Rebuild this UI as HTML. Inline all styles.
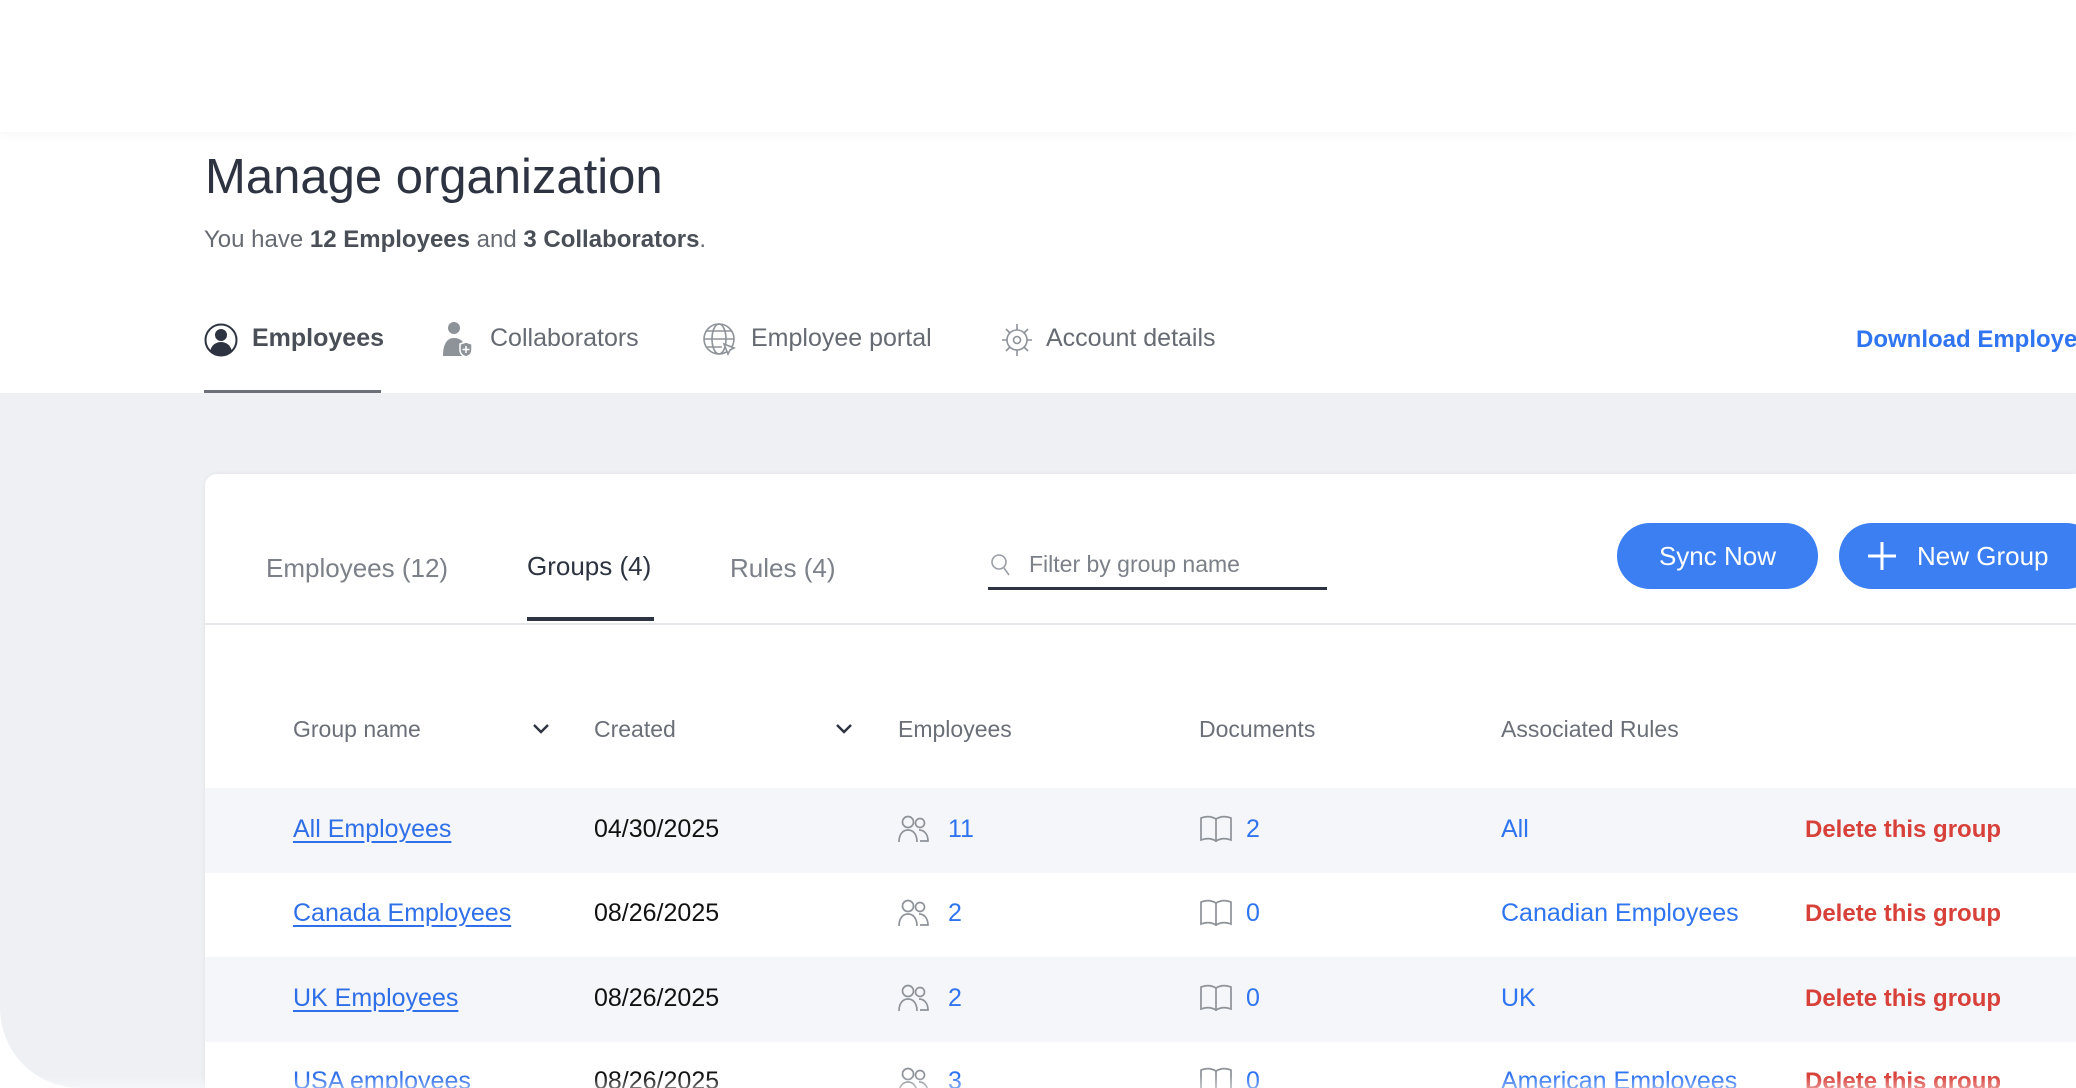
<!DOCTYPE html>
<html style="width:2076px;height:1088px;overflow:hidden"><head><meta charset="utf-8"><style>
*{margin:0;padding:0;box-sizing:border-box}
body{width:2076px;height:1088px;overflow:hidden;background:#fff;font-family:"Liberation Sans",sans-serif;position:relative}
.a{position:absolute;white-space:nowrap}
.gray{position:absolute;left:0;top:393px;width:2076px;height:695px;background:#eff0f4;border-bottom-left-radius:80px}
.card{position:absolute;left:205px;top:474px;width:1871px;height:614px;background:#fff;border-top-left-radius:12px;box-shadow:0 0 6px rgba(0,0,0,.05)}
.row{position:absolute;left:205px;width:1871px;height:85px}
.hd{font-size:23px;color:#6b6f78;top:716px}
.cell{font-size:25px}
.lnk{color:#2f6fe8;text-decoration:underline;text-underline-offset:4px}
.blue{color:#2f74f0}
.del{color:#d8403a;font-weight:bold;font-size:24px}
.btn{position:absolute;background:#3b7ff3;color:#fff;border-radius:34px;font-size:26px;height:66px;line-height:66px;top:523px}
</style></head><body>
<div class="a" style="left:0;top:0;width:2076px;height:132px;background:#fff;box-shadow:0 4px 10px rgba(0,0,0,.03)"></div>
<div class="a" style="left:205px;top:149px;font-size:49px;color:#2d3340">Manage organization</div>
<div class="a" style="left:204px;top:226px;font-size:24px;color:#666a72">You have <b style="color:#4a4e57">12 Employees</b> and <b style="color:#4a4e57">3 Collaborators</b>.</div>

<svg class="a" style="left:204px;top:322px" width="34" height="36" viewBox="0 0 34 36"><circle cx="17" cy="18" r="15.5" fill="#fff" stroke="#2d3340" stroke-width="2"/><circle cx="17" cy="13" r="6" fill="#2d3340"/><path d="M6 30c1-7 6-10 11-10s10 3 11 10c-3 3-7 4-11 4s-8-1-11-4z" fill="#2d3340"/></svg>
<div class="a" style="left:252px;top:324px;font-size:25px;font-weight:bold;color:#4a4e57">Employees</div>
<svg class="a" style="left:440px;top:320px" width="36" height="38" viewBox="0 0 36 38"><circle cx="14" cy="8" r="6" fill="#8e9299"/><path d="M3 36c0-12 4-18 11-18s10 4 11 10v8z" fill="#8e9299"/><path d="M20 24l6-2 6 2v6c0 4-3 6-6 7-3-1-6-3-6-7z" fill="#8e9299" stroke="#fff" stroke-width="1.5"/><path d="M26 26v7M22.5 29.5h7" stroke="#fff" stroke-width="1.5"/></svg>
<div class="a" style="left:490px;top:324px;font-size:25px;color:#666a72">Collaborators</div>
<svg class="a" style="left:702px;top:322px" width="36" height="36" viewBox="0 0 36 36" fill="none" stroke="#8e9299" stroke-width="1.6"><circle cx="17" cy="17" r="15"/><ellipse cx="17" cy="17" rx="7" ry="15"/><path d="M2 17h30M4 9h26M4 25h16"/><path d="M22 22l10 4-4 2-2 4z" fill="#fff"/></svg>
<div class="a" style="left:751px;top:324px;font-size:25px;color:#666a72">Employee portal</div>
<svg class="a" style="left:999px;top:321px" width="36" height="38" viewBox="0 0 36 38" fill="none" stroke="#8e9299" stroke-width="1.6"><circle cx="18" cy="19" r="10"/><circle cx="18" cy="19" r="3.5"/><path d="M18 3v6M18 29v6M3 19h5M28 19h5M7 8l4 4M29 8l-4 4M7 30l4-4M29 30l-4-4"/></svg>
<div class="a" style="left:1046px;top:324px;font-size:25px;color:#666a72">Account details</div>
<div class="a" style="left:1856px;top:326px;font-size:24px;font-weight:bold;color:#2f74f0">Download Employees</div>
<div class="a" style="left:204px;top:390px;width:177px;height:3px;background:#6d7078"></div>

<div class="gray"></div>
<div class="card"></div>
<div class="a" style="left:205px;top:623px;width:1871px;height:2px;background:#e6e7ea"></div>
<div class="a" style="left:266px;top:553px;font-size:26px;color:#7c8088">Employees (12)</div>
<div class="a" style="left:527px;top:551px;font-size:26px;color:#2d3340">Groups (4)</div>
<div class="a" style="left:730px;top:553px;font-size:26px;color:#7c8088">Rules (4)</div>
<div class="a" style="left:527px;top:617px;width:127px;height:4px;background:#2d3340"></div>
<svg class="a" style="left:990px;top:553px" width="22" height="26" viewBox="0 0 22 26" fill="none" stroke="#9a9ea6" stroke-width="1.6"><circle cx="9" cy="9" r="7"/><path d="M14 15l5 7"/></svg>
<div class="a" style="left:1029px;top:551px;font-size:23px;color:#7c8088">Filter by group name</div>
<div class="a" style="left:988px;top:587px;width:339px;height:3px;background:#2d3340"></div>
<div class="btn" style="left:1617px;width:201px;text-align:center">Sync Now</div>
<div class="btn" style="left:1839px;width:260px;padding-left:78px">New Group</div>
<svg class="a" style="left:1866px;top:540px" width="32" height="32" viewBox="0 0 32 32" stroke="#fff" stroke-width="3"><path d="M16 2v28M2 16h28"/></svg>

<div class="a hd" style="left:293px">Group name</div>
<div class="a hd" style="left:594px">Created</div>
<div class="a hd" style="left:898px">Employees</div>
<div class="a hd" style="left:1199px">Documents</div>
<div class="a hd" style="left:1501px">Associated Rules</div>
<svg class="a" style="left:532px;top:722px" width="18" height="14" viewBox="0 0 18 14" fill="none" stroke="#2d3340" stroke-width="2.4"><path d="M2 3l7 7 7-7"/></svg>
<svg class="a" style="left:835px;top:722px" width="18" height="14" viewBox="0 0 18 14" fill="none" stroke="#2d3340" stroke-width="2.4"><path d="M2 3l7 7 7-7"/></svg>

<div class="row" style="top:788px;background:#f5f6f9"></div>
<div class="row" style="top:957px;background:#f5f6f9"></div>

<div class="a cell lnk" style="left:293px;top:815px">All Employees</div>
<div class="a cell" style="left:594px;top:815px;color:#111">04/30/2025</div>
<div class="a cell blue" style="left:948px;top:815px">11</div>
<div class="a cell blue" style="left:1246px;top:815px">2</div>
<div class="a cell blue" style="left:1501px;top:815px">All</div>
<div class="a del" style="left:1805px;top:816px">Delete this group</div>

<div class="a cell lnk" style="left:293px;top:899px">Canada Employees</div>
<div class="a cell" style="left:594px;top:899px;color:#111">08/26/2025</div>
<div class="a cell blue" style="left:948px;top:899px">2</div>
<div class="a cell blue" style="left:1246px;top:899px">0</div>
<div class="a cell blue" style="left:1501px;top:899px">Canadian Employees</div>
<div class="a del" style="left:1805px;top:900px">Delete this group</div>

<div class="a cell lnk" style="left:293px;top:984px">UK Employees</div>
<div class="a cell" style="left:594px;top:984px;color:#111">08/26/2025</div>
<div class="a cell blue" style="left:948px;top:984px">2</div>
<div class="a cell blue" style="left:1246px;top:984px">0</div>
<div class="a cell blue" style="left:1501px;top:984px">UK</div>
<div class="a del" style="left:1805px;top:985px">Delete this group</div>

<div class="a cell lnk" style="left:293px;top:1067px">USA employees</div>
<div class="a cell" style="left:594px;top:1067px;color:#111">08/26/2025</div>
<div class="a cell blue" style="left:948px;top:1067px">3</div>
<div class="a cell blue" style="left:1246px;top:1067px">0</div>
<div class="a cell blue" style="left:1501px;top:1067px">American Employees</div>
<div class="a del" style="left:1805px;top:1068px">Delete this group</div>

<svg width="0" height="0" style="position:absolute"><defs>
<symbol id="pp" viewBox="0 0 34 30"><g fill="none" stroke="#8e9299" stroke-width="1.7"><circle cx="11" cy="8" r="5.5"/><path d="M2 28c0-8 4-12 9-12s9 4 9 12"/><circle cx="23" cy="9" r="4.5"/><path d="M22 16c5 0 9 4 9 11h-8"/></g></symbol>
<symbol id="bk" viewBox="0 0 34 30"><path d="M2 4c5-2 10-2 15 1 5-3 10-3 15-1v22c-5-2-10-2-15 1-5-3-10-3-15-1z M17 5v23" fill="none" stroke="#8e9299" stroke-width="1.7"/></symbol>
</defs></svg>
<svg class="a" style="left:897px;top:814px" width="34" height="30"><use href="#pp"/></svg>
<svg class="a" style="left:897px;top:898px" width="34" height="30"><use href="#pp"/></svg>
<svg class="a" style="left:897px;top:983px" width="34" height="30"><use href="#pp"/></svg>
<svg class="a" style="left:897px;top:1066px" width="34" height="30"><use href="#pp"/></svg>
<svg class="a" style="left:1199px;top:814px" width="34" height="30"><use href="#bk"/></svg>
<svg class="a" style="left:1199px;top:898px" width="34" height="30"><use href="#bk"/></svg>
<svg class="a" style="left:1199px;top:983px" width="34" height="30"><use href="#bk"/></svg>
<svg class="a" style="left:1199px;top:1066px" width="34" height="30"><use href="#bk"/></svg>
<div class="a" style="left:0;top:1076px;width:2076px;height:12px;background:linear-gradient(rgba(255,255,255,0),rgba(255,255,255,.4))"></div>
</body></html>
